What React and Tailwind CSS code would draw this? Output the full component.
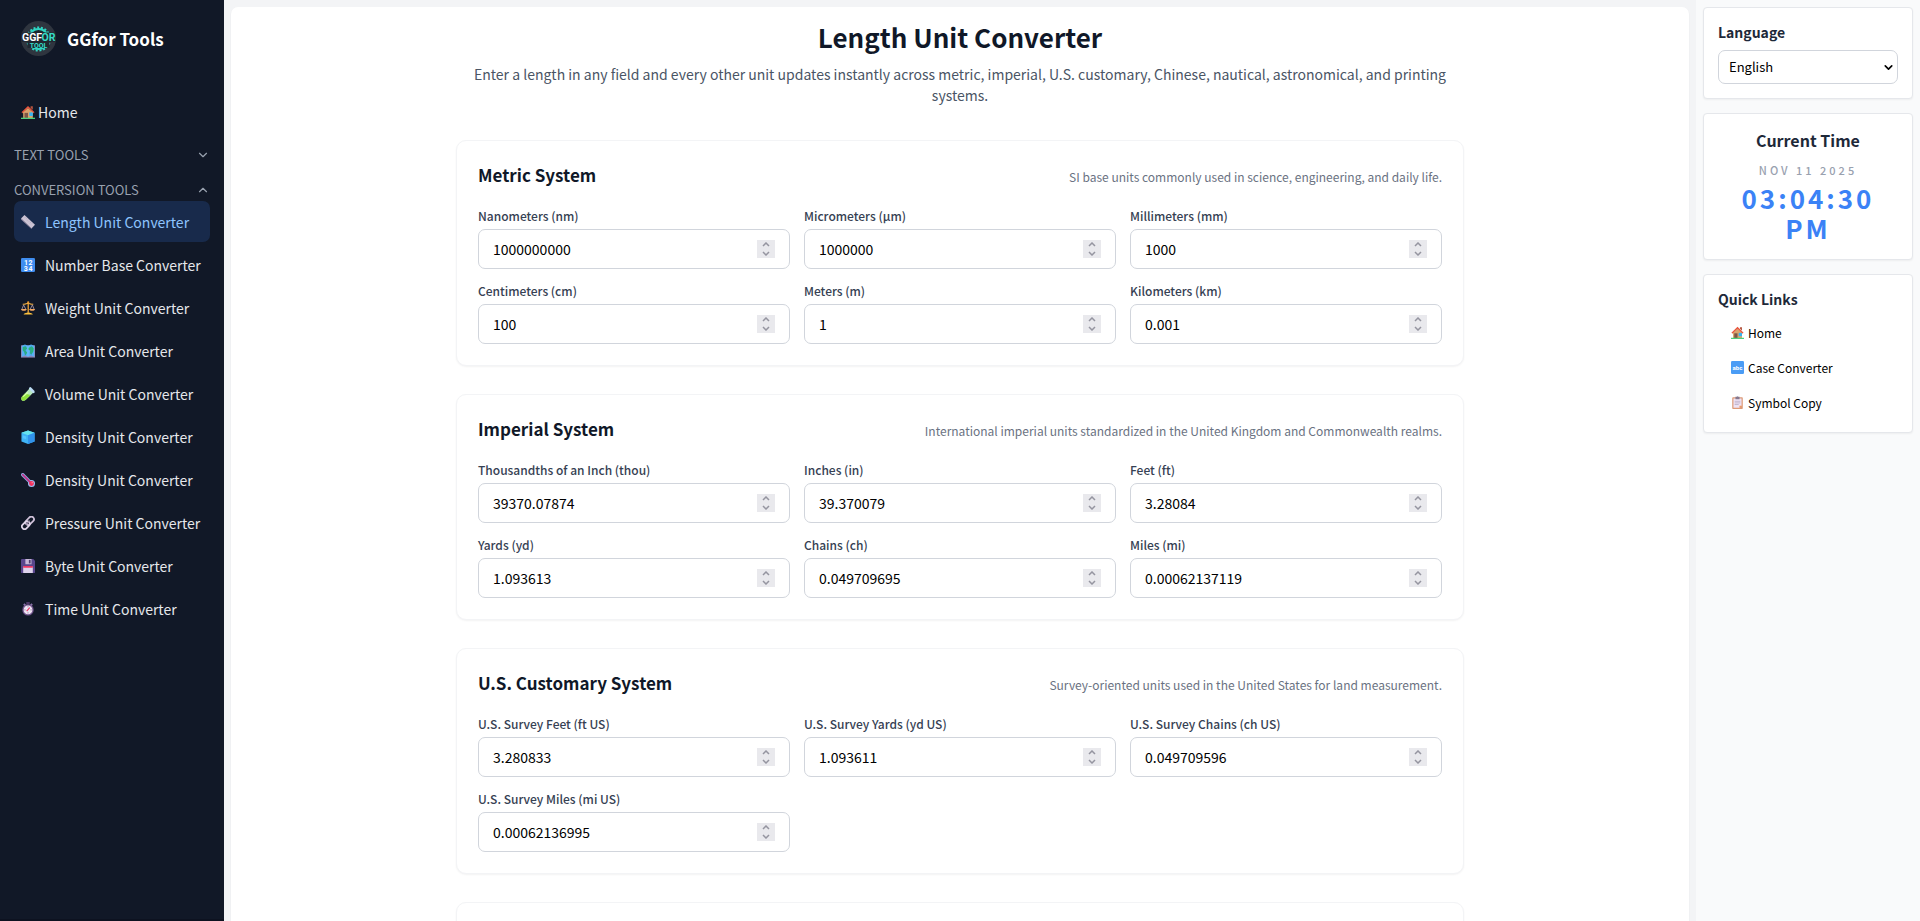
import React, { useState } from "react";
import { ChevronDown, ChevronUp } from "lucide-react";

const HouseIcon = () => (
  <svg viewBox="0 0 32 32" className="w-full h-full">
    <path d="M5 14h22v16H5z" fill="#d9a46c" />
    <path d="M22 3h5v8l-5-4z" fill="#b5553f" />
    <path d="M16 6 28 17v2H4v-2z" fill="#d9a46c" />
    <path d="M1 16.500 16 2l15 14.500-2.500 2L16 7 3.500 18.500z" fill="#e8553e" />
    <path d="M8 18h8v12H8z" fill="#7d5748" />
    <path d="M19 17h8v8h-8z" fill="#35b4f5" />
    <path d="M0 29h32v3H0z" fill="#4fcf7c" />
  </svg>
);

const RulerIcon = () => (
  <svg viewBox="0 0 32 32" className="w-full h-full">
    <path d="M0 8 8 0l24 22-8 9z" fill="#cbc3d3" />
    <path d="M0 8v2l24 22v-2z" fill="#998da8" />
    <path d="m11 4-3 3m6 0-2 2m5 1-3 3m6 0-2 2m5 1-3 3m6 0-2 2" stroke="#a89bb8" strokeWidth="1.200" />
  </svg>
);

const NumbersIcon = () => (
  <svg viewBox="0 0 32 32" className="w-full h-full">
    <rect width="32" height="32" rx="3" fill="#3f8df0" />
    <text x="7" y="15" fontSize="16" fontWeight="700" fill="#fff" fontFamily="Roboto, sans-serif">1</text>
    <text x="17" y="15" fontSize="16" fontWeight="700" fill="#fff" fontFamily="Roboto, sans-serif">2</text>
    <text x="6" y="29" fontSize="16" fontWeight="700" fill="#fff" fontFamily="Roboto, sans-serif">3</text>
    <text x="17" y="29" fontSize="16" fontWeight="700" fill="#fff" fontFamily="Roboto, sans-serif">4</text>
  </svg>
);

const ScaleIcon = () => (
  <svg viewBox="0 0 32 32" className="w-full h-full">
    <path d="M15 3h3v24h-3z" fill="#e9a13a" />
    <path d="M4 7c5 2 7-1 12-2 5 1 7 4 12 2" fill="none" stroke="#f0ad42" strokeWidth="2.500" />
    <circle cx="16.500" cy="3" r="2.500" fill="#e9962f" />
    <path d="M6 9 2 19m4-10 5 10m15-10-5 10m5-10 4 10" stroke="#b9a3b5" strokeWidth="1.800" />
    <path d="M0 18h13c0 6-13 6-13 0zm19 0h13c0 6-13 6-13 0z" fill="#f5a862" />
    <path d="M6 31c0-4 6-3 8-5h5c2 2 8 1 8 5z" fill="#fbbf3c" />
  </svg>
);

const MapIcon = () => (
  <svg viewBox="0 0 32 32" className="w-full h-full">
    <path d="M0 3h32v28H0z" fill="#8d86b8" />
    <path d="m2 4 7-3 7 3 7-3 7 3v25l-7-3-7 3-7-3-7 3z" fill="#55b0f5" />
    <path d="m4 7 7-2 3 5-4 4 4 6-4 6-3-8-3-4zM17 9l8-4 4 5-1 7-4 7-4-3 1-6-4-2z" fill="#27b573" />
    <path d="M9 3v23M23 3v23" stroke="#3a86d0" strokeWidth="1" />
    <path d="M16 4v25" stroke="#8ccdf8" strokeWidth="1" />
  </svg>
);

const TubeIcon = () => (
  <svg viewBox="0 0 32 32" className="w-full h-full">
    <path d="m20 3 9 9L11 29c-3 3-7 3-9 1s-2-6 1-9z" fill="#b7e8c0" />
    <path d="m9 15 13 3-11 11c-3 3-7 3-9 1s-2-6 1-9z" fill="#8fe03c" />
    <path d="M5 22 16 12" stroke="#d9ffab" strokeWidth="2.500" />
    <path d="m19 1 3-1 9 9v4l-3 1L18 4z" fill="#bcdcf5" />
  </svg>
);

const CubeIcon = () => (
  <svg viewBox="0 0 32 32" className="w-full h-full">
    <path d="M16 1 31 6v20l-15 6L1 26V6z" fill="#3fb3f6" />
    <path d="m1 6 15-5 15 5-15 6z" fill="#65e3ee" />
    <path d="m16 12 15-6v20l-15 6z" fill="#3193ec" />
    <path d="m4 12 8 3v6l-8-2z" fill="#56c6ff" />
  </svg>
);

const ThermometerIcon = () => (
  <svg viewBox="0 0 32 32" className="w-full h-full">
    <path d="m4 4 18 18" stroke="#8fa9e0" strokeWidth="8" strokeLinecap="round" />
    <circle cx="24" cy="24" r="8" fill="#9bbcf0" />
    <path d="m4 4 18 18" stroke="#c02b83" strokeWidth="4" strokeLinecap="round" />
    <circle cx="24" cy="24" r="5.500" fill="#f5315d" />
    <circle cx="25.500" cy="22" r="1.500" fill="#ff9cab" />
  </svg>
);

const LinkIcon = () => (
  <svg viewBox="0 0 32 32" className="w-full h-full" fill="none">
    <rect x="9" y="5" width="22" height="12" rx="6" transform="rotate(-45 20 11)" stroke="#cfc0d8" strokeWidth="4" />
    <rect x="1" y="15" width="20" height="12" rx="6" transform="rotate(-45 11 21)" stroke="#e0d5e8" strokeWidth="4" />
    <path d="m11 20 9-9" stroke="#988aa5" strokeWidth="3" />
  </svg>
);

const FloppyIcon = () => (
  <svg viewBox="0 0 32 32" className="w-full h-full">
    <path d="M0 2q0-2 2-2h26l4 4v26q0 2-2 2H2q-2 0-2-2z" fill="#59468c" />
    <path d="M10 0h14v12H10z" fill="#c8b8d8" />
    <path d="M18 2h4v8h-4z" fill="#514071" />
    <path d="M5 17h22v15H5z" fill="#dfd3ec" />
    <path d="M5 16h22v4H5z" fill="#ee3864" />
  </svg>
);

const StopwatchIcon = () => (
  <svg viewBox="0 0 32 32" className="w-full h-full">
    <path d="M12 0h8v5h-8z" fill="#4d3866" />
    <path d="m5 6 3-3 4 4-3 3zm22 0-3-3-4 4 3 3z" fill="#8a72a8" />
    <circle cx="16" cy="18" r="13" fill="#71558c" />
    <circle cx="16" cy="18" r="10" fill="#efe4f4" />
    <path d="M16 10v2m0 12v2m-8-8h2m12 0h2" stroke="#6a5b78" strokeWidth="2" />
    <path d="m13 21 7-8" stroke="#e6325d" strokeWidth="2.500" />
  </svg>
);

const AbcIcon = () => (
  <svg viewBox="0 0 32 32" className="w-full h-full">
    <rect width="32" height="32" rx="3" fill="#4a9cf5" />
    <text x="16" y="21" textAnchor="middle" fontSize="15" fontWeight="700" fill="#fff" fontFamily="Roboto, sans-serif">abc</text>
  </svg>
);

const ClipboardIcon = () => (
  <svg viewBox="0 0 32 32" className="w-full h-full">
    <rect x="3" y="3" width="26" height="29" rx="2" fill="#dd9a78" />
    <path d="M6 6h20v18l-5 5H6z" fill="#efe3f5" />
    <path d="M21 29v-5h5z" fill="#f58b3c" />
    <path d="M11 2h3q2-3 4 0h3v6H11z" fill="#85788f" />
    <path d="M9 13h14M9 17h14M9 21h10" stroke="#a79ab5" strokeWidth="1.500" />
  </svg>
);

const Logo = () => (
  <svg viewBox="0 0 70 70" className="size-[35px] shrink-0" aria-hidden="true">
    <circle cx="35" cy="35" r="35" fill="#2f353f" />
    <circle cx="35" cy="36" r="20" fill="#1d242d" stroke="#2fd6c3" strokeWidth="4" />
    <circle cx="35" cy="36" r="23" fill="none" stroke="#2fd6c3" strokeWidth="4" strokeDasharray="4 3.500" />
    <path d="M1 23h68v19H1z" fill="#22272f" />
    <path d="M13 41h44v13H13z" fill="#1f2730" />
    <text x="2" y="40" fontSize="21" fontWeight="700" fill="#fff" fontFamily="Roboto, sans-serif">GGF</text>
    <text x="41" y="40" fontSize="21" fontWeight="700" fill="#35dcc8" fontFamily="Roboto, sans-serif">OR</text>
    <text x="35" y="53" textAnchor="middle" fontSize="14" fontWeight="700" fill="#35dcc8" fontFamily="Roboto, sans-serif">TOOL</text>
  </svg>
);

const tools = [
  { name: "Length Unit Converter", Icon: RulerIcon, active: true },
  { name: "Number Base Converter", Icon: NumbersIcon },
  { name: "Weight Unit Converter", Icon: ScaleIcon },
  { name: "Area Unit Converter", Icon: MapIcon },
  { name: "Volume Unit Converter", Icon: TubeIcon },
  { name: "Density Unit Converter", Icon: CubeIcon },
  { name: "Density Unit Converter", Icon: ThermometerIcon },
  { name: "Pressure Unit Converter", Icon: LinkIcon },
  { name: "Byte Unit Converter", Icon: FloppyIcon },
  { name: "Time Unit Converter", Icon: StopwatchIcon },
];

const quickLinks = [
  { name: "Home", Icon: HouseIcon },
  { name: "Case Converter", Icon: AbcIcon },
  { name: "Symbol Copy", Icon: ClipboardIcon },
];

const systems = [
  {
    title: "Metric System",
    note: "SI base units commonly used in science, engineering, and daily life.",
    units: [
      { id: "nm", label: "Nanometers (nm)", value: "1000000000" },
      { id: "um", label: "Micrometers (μm)", value: "1000000" },
      { id: "mm", label: "Millimeters (mm)", value: "1000" },
      { id: "cm", label: "Centimeters (cm)", value: "100" },
      { id: "m", label: "Meters (m)", value: "1" },
      { id: "km", label: "Kilometers (km)", value: "0.001" },
    ],
  },
  {
    title: "Imperial System",
    note: "International imperial units standardized in the United Kingdom and Commonwealth realms.",
    units: [
      { id: "thou", label: "Thousandths of an Inch (thou)", value: "39370.07874" },
      { id: "in", label: "Inches (in)", value: "39.370079" },
      { id: "ft", label: "Feet (ft)", value: "3.28084" },
      { id: "yd", label: "Yards (yd)", value: "1.093613" },
      { id: "ch", label: "Chains (ch)", value: "0.049709695" },
      { id: "mi", label: "Miles (mi)", value: "0.00062137119" },
    ],
  },
  {
    title: "U.S. Customary System",
    note: "Survey-oriented units used in the United States for land measurement.",
    units: [
      { id: "ft-us", label: "U.S. Survey Feet (ft US)", value: "3.280833" },
      { id: "yd-us", label: "U.S. Survey Yards (yd US)", value: "1.093611" },
      { id: "ch-us", label: "U.S. Survey Chains (ch US)", value: "0.049709596" },
      { id: "mi-us", label: "U.S. Survey Miles (mi US)", value: "0.00062136995" },
    ],
  },
  { title: "", note: "", units: [] },
];

const UnitField = ({ unit }) => {
  const [value, setValue] = useState(unit.value);

  const step = (amount) => setValue(String(Number(value) + amount));

  return (
    <div>
      <label htmlFor={unit.id} className="block text-xs leading-4 font-medium text-gray-700 mb-[5px]">
        {unit.label}
      </label>
      <div className="flex items-center h-10 px-3.5 border border-gray-300 rounded-[7px] bg-white">
        <input
          id={unit.id}
          type="number"
          value={value}
          onChange={(e) => setValue(e.target.value)}
          className="flex-1 min-w-0 text-sm text-black outline-none [appearance:textfield] [&::-webkit-inner-spin-button]:appearance-none"
        />
        <div className="flex flex-col w-[18px] h-[18px] bg-[#e9e9ed] text-[#9595a0]">
          <button type="button" aria-label="Increase" onClick={() => step(1)} className="flex-1 flex items-end justify-center">
            <svg viewBox="0 0 8 5" className="w-2 h-[5px] mb-0.5" fill="none" stroke="currentColor" strokeWidth="1.500">
              <path d="m1 4 3-3 3 3" />
            </svg>
          </button>
          <button type="button" aria-label="Decrease" onClick={() => step(-1)} className="flex-1 flex items-start justify-center">
            <svg viewBox="0 0 8 5" className="w-2 h-[5px] mt-0.5" fill="none" stroke="currentColor" strokeWidth="1.500">
              <path d="m1 1 3 3 3-3" />
            </svg>
          </button>
        </div>
      </div>
    </div>
  );
};

const Sidebar = () => {
  return (
    <aside className="w-56 shrink-0 flex flex-col bg-[#111827] text-gray-200">
      <a href="#" className="flex items-center gap-[11px] h-[77px] pl-[21px] text-white">
        <Logo />
        <span className="text-[17px] font-bold">GGfor Tools</span>
      </a>

      <nav className="flex-1 px-3.5 pt-[15px]">
        <a href="#" className="flex items-center gap-[3px] h-10 px-[7px] text-sm">
          <span className="size-3.5"><HouseIcon /></span>
          Home
        </a>

        <button type="button" className="flex items-center justify-between w-full h-[35px] mt-[5px] mb-1.5 text-[13px] text-gray-400">
          TEXT TOOLS
          <ChevronDown size={14} />
        </button>
        <button type="button" className="flex items-center justify-between w-full h-[23px] text-[13px] text-gray-400">
          CONVERSION TOOLS
          <ChevronUp size={14} />
        </button>

        <ul className="flex flex-col gap-0.5">
          {tools.map((tool, i) => (
            <li key={i}>
              <a
                href="#"
                className={`flex items-center gap-2.5 h-[41px] px-[7px] rounded-[7px] text-sm whitespace-nowrap ${
                  tool.active ? "bg-[#182a4b] text-blue-300" : ""
                }`}
              >
                <span className="size-3.5 shrink-0"><tool.Icon /></span>
                {tool.name}
              </a>
            </li>
          ))}
        </ul>
      </nav>
      <div className="h-0.5 bg-[#0d1220]" />
    </aside>
  );
};

const RightPanel = () => {
  return (
    <aside className="w-56 shrink-0 p-[7px] flex flex-col gap-3.5 bg-gray-50">
      <div className="p-3.5 bg-white border border-gray-200 rounded shadow-xs">
        <label htmlFor="language" className="block text-sm leading-5 font-bold text-gray-800 mb-2">
          Language
        </label>
        <div className="relative">
          <select
            id="language"
            className="w-full h-[34px] px-2.5 appearance-none border border-gray-300 rounded-[7px] bg-white text-[13px] text-black"
          >
            <option>English</option>
          </select>
          <ChevronDown size={13} strokeWidth={3} className="absolute right-[3px] top-[11px] text-black pointer-events-none" />
        </div>
      </div>

      <div className="p-3.5 pb-4 bg-white border border-gray-200 rounded shadow-xs text-center">
        <h2 className="text-base leading-6 font-bold text-gray-800">Current Time</h2>
        <p className="mt-2.5 text-[11px] leading-4 font-medium tracking-[3px] text-gray-400">NOV 11 2025</p>
        <p className="mt-[5px] text-[26px] leading-[30px] font-bold tracking-[3px] text-[#3b82f6]">03:04:30 PM</p>
      </div>

      <div className="px-3.5 py-3 bg-white border border-gray-200 rounded shadow-xs">
        <h2 className="text-sm leading-6 font-bold text-gray-800 mb-1">Quick Links</h2>
        <ul>
          {quickLinks.map((link) => (
            <li key={link.name}>
              <a href="#" className="flex items-center gap-1 h-[35px] px-[13px] text-xs text-black">
                <span className="size-[13px]"><link.Icon /></span>
                {link.name}
              </a>
            </li>
          ))}
        </ul>
      </div>
    </aside>
  );
};

const App = () => {
  return (
    <div className="flex h-screen overflow-hidden bg-gray-100 font-['Noto_Sans_CJK_SC','Noto_Sans',sans-serif]">
      <Sidebar />

      <main className="flex-1 min-w-0 px-[7px] pt-[7px] overflow-y-auto [scrollbar-width:none]">
        <div className="px-3.5 py-3 bg-white rounded-[7px] shadow-xs">
          <div className="max-w-[1008px] mx-auto">
            <header className="text-center mb-[34px]">
              <h1 className="text-[26px] leading-9 font-bold text-gray-900">Length Unit Converter</h1>
              <p className="mt-[9px] px-3.5 text-sm leading-[21px] text-gray-600">
                Enter a length in any field and every other unit updates instantly across metric, imperial, U.S.
                customary, Chinese, nautical, astronomical, and printing systems.
              </p>
            </header>

            <div className="flex flex-col gap-7">
              {systems.map((system, i) => (
                <section key={i} className="px-[21px] pt-5 pb-[21px] bg-white border border-gray-100 rounded-[10px] shadow-xs">
                  <div className="flex items-baseline justify-between mb-[19px]">
                    <h2 className="text-[17px] leading-7 font-bold text-gray-900">{system.title}</h2>
                    <p className="text-xs leading-[18px] text-gray-500">{system.note}</p>
                  </div>
                  <div className="grid grid-cols-3 gap-3.5">
                    {system.units.map((unit) => (
                      <UnitField key={unit.id} unit={unit} />
                    ))}
                  </div>
                </section>
              ))}
            </div>
          </div>
        </div>
      </main>

      <RightPanel />
    </div>
  );
};

export default App;
